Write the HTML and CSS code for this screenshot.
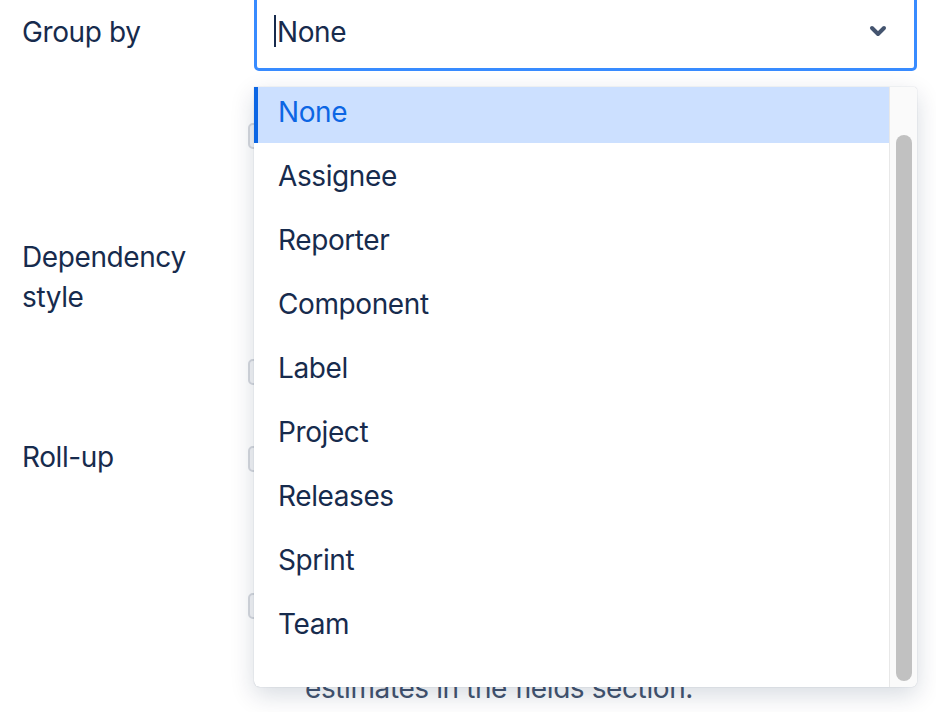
FILE: index.html
```html
<!DOCTYPE html>
<html lang="en">
<head>
  <meta charset="UTF-8" />
  <title>View settings</title>
  <link rel="stylesheet" href="styles.css">
</head>
<body>
<div class="settings">

  <!-- GROUP BY -->
  <div class="row row-group">
    <div class="label">Group by</div>
    <div class="field">
      <div class="select">
        <span class="caret"></span>
        <span class="select-value">None</span>
        <svg class="chevron" width="18" height="12" viewBox="0 0 18 12">
          <path d="M3 3 L9 9 L15 3" fill="none" stroke="#44546f" stroke-width="4" stroke-linecap="round" stroke-linejoin="round"/>
        </svg>
      </div>

      <div class="menu">
        <ul class="menu-list">
          <li class="menu-item selected">None</li>
          <li class="menu-item">Assignee</li>
          <li class="menu-item">Reporter</li>
          <li class="menu-item">Component</li>
          <li class="menu-item">Label</li>
          <li class="menu-item">Project</li>
          <li class="menu-item">Releases</li>
          <li class="menu-item">Sprint</li>
          <li class="menu-item">Team</li>
        </ul>
        <div class="scroll-track">
          <div class="scroll-thumb"></div>
        </div>
      </div>
    </div>
  </div>

  <!-- OPTIONS UNDER THE MENU -->
  <div class="row row-warnings">
    <div class="label"></div>
    <div class="field">
      <span class="box"></span>
    </div>
  </div>

  <div class="row row-dependency">
    <div class="label">Dependency<br>style</div>
    <div class="field">
      <span class="box box-lines"></span>
    </div>
  </div>

  <div class="row row-rollup">
    <div class="label">Roll-up</div>
    <div class="field">
      <span class="box box-dates"></span>
      <span class="box box-estimates"></span>
      <p class="hint">estimates in the fields section.</p>
    </div>
  </div>

</div>
</body>
</html>
```

FILE: styles.css
```css
body {
  margin: 0;
  font-family: Inter, "Noto Sans", sans-serif;
  font-size: 28px;
  line-height: 40px;
  letter-spacing: -0.4px;
  color: #172b4d;
  background: #fff;
}
.settings {
  padding-left: 22px;
  height: 712px;
  overflow: hidden;
}
.row {
  display: grid;
  grid-template-columns: 232px 663px;
}
.label {
  padding-top: 2px;
}
.field {
  position: relative;
}

/* select */
.row-group {
  margin-top: -9px;
  align-items: center;
}
.select {
  height: 80px;
  box-sizing: border-box;
  border: 3px solid #388bff;
  border-radius: 5px;
  display: flex;
  align-items: center;
  padding: 2px 27px 0 17px;
}
.caret {
  width: 2px;
  height: 32px;
  background: #172b4d;
  margin: -2px 1px 0 0;
}
.select-value {
  flex: 1;
}
.chevron {
  display: block;
  margin-top: -2px;
}

/* dropdown menu */
.menu {
  position: absolute;
  top: 96px;
  left: 0;
  width: 663px;
  height: 600px;
  background: #fff;
  border-radius: 0 4px 6px 6px;
  box-shadow: 0 8px 24px rgba(9, 30, 66, 0.16), 0 0 1px rgba(9, 30, 66, 0.35);
  display: flex;
  overflow: hidden;
  z-index: 2;
}
.menu-list {
  flex: 1;
  list-style: none;
  margin: -8px 0 0;
  padding: 0;
}
.menu-item {
  height: 64px;
  line-height: 66px;
  padding-left: 24px;
  color: #172b4d;
}
.menu-item.selected {
  background: #cce0ff;
  color: #0c66e4;
  border-left: 4px solid #0c66e4;
  padding-left: 20px;
}
.scroll-track {
  width: 28px;
  background: #fafafa;
  border-left: 1px solid #e8e8e8;
  box-sizing: border-box;
}
.scroll-thumb {
  width: 16px;
  height: 546px;
  margin: 48px 0 0 6px;
  background: #c1c1c1;
  border-radius: 8px;
}

/* fields hidden behind the menu */
.box {
  display: block;
  width: 22px;
  height: 22px;
  border: 2px solid #d5d8de;
  background: #f4f5f7;
  border-radius: 5px;
  margin-left: -6px;
}
.row-warnings {
  margin-top: 52px;
}
.row-dependency {
  margin-top: 86px;
}
.box-lines {
  margin-top: 124px;
}
.row-rollup {
  margin-top: 50px;
}
.box-dates {
  margin-top: 11px;
}
.box-estimates {
  margin-top: 121px;
}
.hint {
  margin: 49px 0 0 51px;
  color: #44546f;
}
```
